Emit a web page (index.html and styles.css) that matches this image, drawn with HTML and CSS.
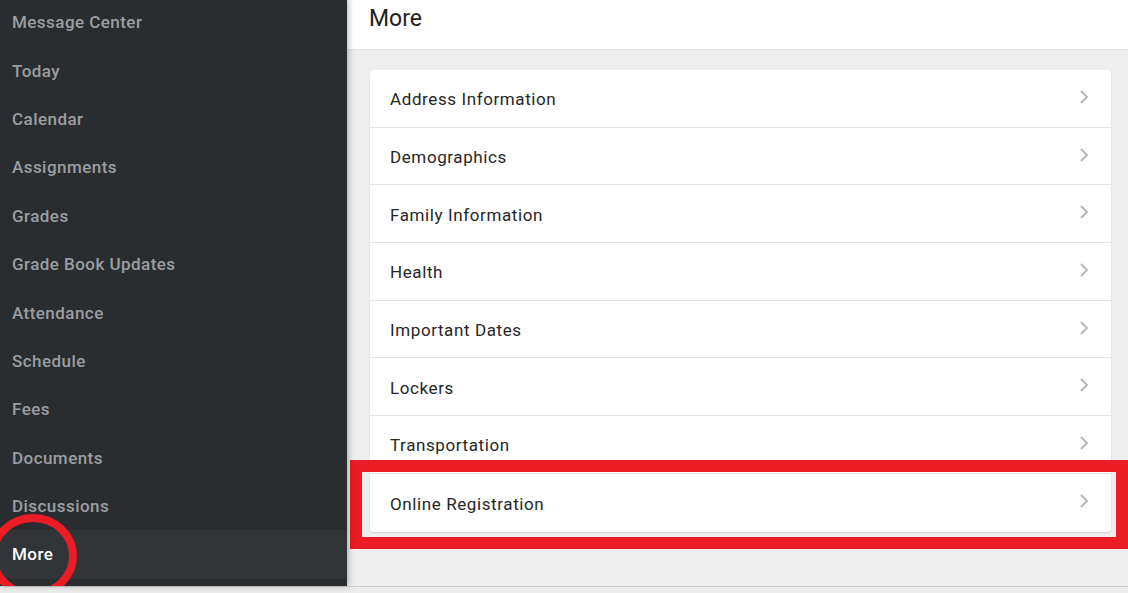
FILE: index.html
```html
<!DOCTYPE html>
<html>
<head>
<meta charset="utf-8">
<link rel="stylesheet" href="styles.css">
</head>
<body>
<div class="app">
  <nav class="sidebar">
    <div class="nav-item">Message Center</div>
    <div class="nav-item">Today</div>
    <div class="nav-item">Calendar</div>
    <div class="nav-item">Assignments</div>
    <div class="nav-item">Grades</div>
    <div class="nav-item">Grade Book Updates</div>
    <div class="nav-item">Attendance</div>
    <div class="nav-item">Schedule</div>
    <div class="nav-item">Fees</div>
    <div class="nav-item">Documents</div>
    <div class="nav-item">Discussions</div>
    <div class="nav-item active">More</div>
    <svg class="circle" width="100" height="100" viewBox="0 0 100 100">
      <ellipse cx="36" cy="45" rx="40" ry="38" fill="none" stroke="#ec1c24" stroke-width="8"/>
    </svg>
  </nav>
  <main class="main">
    <header class="header">More</header>
    <div class="content">
      <div class="card">
        <div class="row"><span>Address Information</span><svg class="chev" viewBox="0 0 10 16" width="10" height="16"><path d="M2 2 L8 8 L2 14" fill="none" stroke="#b4b4b4" stroke-width="1.8"/></svg></div>
        <div class="row"><span>Demographics</span><svg class="chev" viewBox="0 0 10 16" width="10" height="16"><path d="M2 2 L8 8 L2 14" fill="none" stroke="#b4b4b4" stroke-width="1.8"/></svg></div>
        <div class="row"><span>Family Information</span><svg class="chev" viewBox="0 0 10 16" width="10" height="16"><path d="M2 2 L8 8 L2 14" fill="none" stroke="#b4b4b4" stroke-width="1.8"/></svg></div>
        <div class="row"><span>Health</span><svg class="chev" viewBox="0 0 10 16" width="10" height="16"><path d="M2 2 L8 8 L2 14" fill="none" stroke="#b4b4b4" stroke-width="1.8"/></svg></div>
        <div class="row"><span>Important Dates</span><svg class="chev" viewBox="0 0 10 16" width="10" height="16"><path d="M2 2 L8 8 L2 14" fill="none" stroke="#b4b4b4" stroke-width="1.8"/></svg></div>
        <div class="row"><span>Lockers</span><svg class="chev" viewBox="0 0 10 16" width="10" height="16"><path d="M2 2 L8 8 L2 14" fill="none" stroke="#b4b4b4" stroke-width="1.8"/></svg></div>
        <div class="row"><span>Transportation</span><svg class="chev" viewBox="0 0 10 16" width="10" height="16"><path d="M2 2 L8 8 L2 14" fill="none" stroke="#b4b4b4" stroke-width="1.8"/></svg></div>
        <div class="row"><span>Online Registration</span><svg class="chev" viewBox="0 0 10 16" width="10" height="16"><path d="M2 2 L8 8 L2 14" fill="none" stroke="#b4b4b4" stroke-width="1.8"/></svg></div>
      </div>
      <div class="highlight"></div>
    </div>
  </main>
</div>
<div class="footer-strip"></div>
</body>
</html>
```
FILE: styles.css
```css
html, body {
  margin: 0;
  padding: 0;
  width: 1128px;
  height: 593px;
  overflow: hidden;
  background: #eaeaea;
  font-family: Roboto, "Liberation Sans", sans-serif;
}
.app {
  display: flex;
  height: 587px;
  border-bottom: 1px solid #cfcfcf;
  box-sizing: border-box;
}
.sidebar {
  position: relative;
  width: 347px;
  flex-shrink: 0;
  background: #2a2d30;
  margin-top: -2px;
  overflow: hidden;
  box-shadow: 2px 0 6px rgba(0,0,0,0.25);
  z-index: 2;
}
.nav-item {
  height: 48.4px;
  display: flex;
  align-items: center;
  padding-left: 12px;
  font-size: 17px;
  font-weight: 500;
  letter-spacing: 0.45px;
  color: #9b9ea1;
}
.nav-item.active {
  background: #313538;
  color: #ffffff;
}
.circle {
  position: absolute;
  left: -3px;
  top: 513px;
}
.main {
  flex: 1;
  display: flex;
  flex-direction: column;
  background: #eeeeee;
}
.header {
  height: 50px;
  box-sizing: border-box;
  background: #ffffff;
  border-bottom: 1px solid #e2e2e2;
  padding-left: 22px;
  padding-top: 5px;
  font-size: 23px;
  color: #222222;
}
.content {
  position: relative;
  padding: 20px 17px 0 23px;
}
.card {
  background: #ffffff;
  border-radius: 4px;
  box-shadow: 0 1px 2px rgba(0,0,0,0.12);
}
.row {
  height: 57.7px;
  box-sizing: border-box;
  display: flex;
  align-items: center;
  justify-content: space-between;
  padding: 2px 22px 0 20px;
  border-bottom: 1px solid #e3e3e3;
  font-size: 17px;
  font-weight: 400;
  letter-spacing: 0.6px;
  color: #262626;
}
.row:last-child {
  border-bottom: none;
}
.chev {
  margin-top: -5px;
}
.highlight {
  position: absolute;
  left: 3px;
  top: 410px;
  width: 778px;
  height: 89px;
  box-sizing: border-box;
  border: 12px solid #ec1c24;
}
.footer-strip {
  height: 6px;
  background: #ececec;
}
```
